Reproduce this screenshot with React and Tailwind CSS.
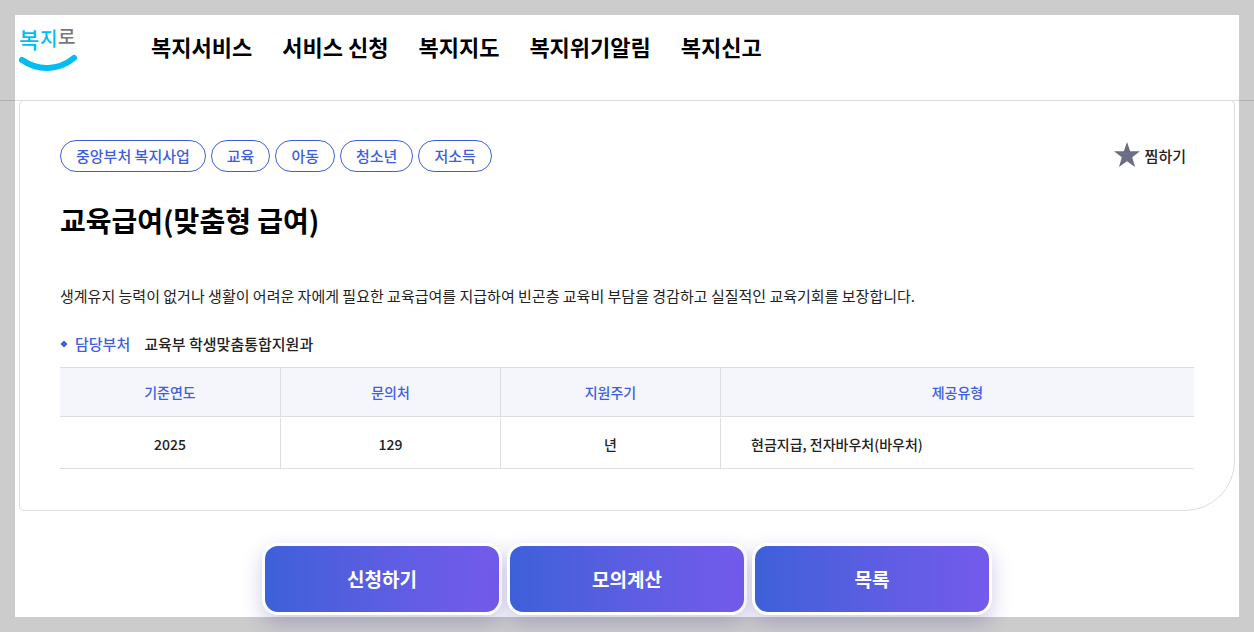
import React, { useState } from "react";

const MENU = ["복지서비스", "서비스 신청", "복지지도", "복지위기알림", "복지신고"];
const TAGS = ["중앙부처 복지사업", "교육", "아동", "청소년", "저소득"];
const ACTIONS = ["신청하기", "모의계산", "목록"];

const COLUMNS = [
  { label: "기준연도", value: "2025" },
  { label: "문의처", value: "129" },
  { label: "지원주기", value: "년" },
  { label: "제공유형", value: "현금지급, 전자바우처(바우처)" },
];

function Logo() {
  return (
    <svg viewBox="0 0 60 56" className="w-[60px] h-14" role="img" aria-label="복지로">
      <g fontFamily="'Noto Sans CJK KR', sans-serif" fontWeight="500">
        <text x="1" y="30" fontSize="22" fill="#00bdf2">복</text>
        <text x="22" y="28" fontSize="19" fill="#00bdf2">지</text>
        <text x="40" y="26" fontSize="19" fill="#77787b">로</text>
      </g>
      <path
        d="M4 42C20 53 40 53 56 40"
        fill="none"
        stroke="#00bdf2"
        strokeWidth="6"
        strokeLinecap="round"
      />
    </svg>
  );
}

function Header() {
  return (
    <header className="h-[101px] border-b border-[#dcdcdc] pl-[18px] flex items-start">
      <a href="#home" className="mt-[18px]">
        <Logo />
      </a>
      <nav className="ml-[73px] mt-[30px] flex gap-[30px]">
        {MENU.map((item) => (
          <a
            key={item}
            href="#menu"
            className="text-[22px] leading-8 font-bold text-black whitespace-nowrap"
          >
            {item}
          </a>
        ))}
      </nav>
    </header>
  );
}

function InfoTable() {
  return (
    <table className="mt-[11px] w-full table-fixed border-separate border-spacing-0 text-sm">
      <colgroup>
        <col className="w-[221px]" />
        <col className="w-[220px]" />
        <col className="w-[220px]" />
        <col />
      </colgroup>
      <thead>
        <tr>
          {COLUMNS.map((col) => (
            <th
              key={col.label}
              scope="col"
              className="h-[50px] border-y border-r last:border-r-0 border-[#dcdde0] bg-[#f5f6fb] font-medium text-[#3e5fdb]"
            >
              {col.label}
            </th>
          ))}
        </tr>
      </thead>
      <tbody>
        <tr>
          {COLUMNS.map((col) => (
            <td
              key={col.label}
              className="h-[52px] border-t-2 border-t-white border-b border-b-[#dcdde0] border-r border-r-[#dcdde0] last:border-r-0 text-center last:text-left last:pl-[30px] font-medium text-[#222]"
            >
              {col.value}
            </td>
          ))}
        </tr>
      </tbody>
    </table>
  );
}

export default function App() {
  const [liked, setLiked] = useState(false);

  return (
    <div className="relative min-h-screen overflow-hidden bg-white pb-[17px] font-['Noto_Sans_CJK_KR',sans-serif] text-[#222]">
      <Header />

      <main>
        <section className="mx-[19px] -mt-px border border-[#dcdcdc] rounded-[5px] rounded-br-[50px] px-10 pt-[39px] pb-[41px]">
          <div className="flex items-center justify-between">
            <ul className="flex gap-[5px]">
              {TAGS.map((tag) => (
                <li
                  key={tag}
                  className="h-8 px-[15px] flex items-center rounded-full border border-[#3e5fdb] text-[15px] font-medium text-[#3e5fdb]"
                >
                  {tag}
                </li>
              ))}
            </ul>
            <button
              type="button"
              aria-pressed={liked}
              onClick={() => setLiked(!liked)}
              className="mr-2 flex items-center gap-[5px] text-[15px] font-medium"
            >
              <svg viewBox="0 0 26 25" className="w-[26px] h-[25px] mb-1" aria-hidden="true">
                <path
                  d="M13 0L16.2 9.3H26L18.2 15.2L21 25L13 19.2L5 25L7.8 15.2L0 9.3H9.8Z"
                  fill={liked ? "#3e5fdb" : "#6b6d85"}
                />
              </svg>
              찜하기
            </button>
          </div>

          <h1 className="mt-7 text-[28px] leading-10 font-bold text-black">
            교육급여(맞춤형 급여)
          </h1>
          <p className="mt-11 text-[15px] leading-6">
            생계유지 능력이 없거나 생활이 어려운 자에게 필요한 교육급여를 지급하여 빈곤층 교육비 부담을 경감하고 실질적인 교육기회를 보장합니다.
          </p>

          <dl className="mt-6 flex items-center text-[15px] leading-6 font-medium">
            <dt className="flex items-center text-[#3e5fdb]">
              <svg viewBox="0 0 8 8" className="w-2 h-2 mr-[7px]" aria-hidden="true">
                <path d="M4 0.5L7.5 4L4 7.5L0.5 4Z" fill="#3e5fdb" />
              </svg>
              담당부처
            </dt>
            <dd className="ml-[14px]">교육부 학생맞춤통합지원과</dd>
          </dl>

          <InfoTable />
        </section>

        <div className="mt-8 flex justify-center gap-[5px]">
          {ACTIONS.map((label) => (
            <button
              key={label}
              type="button"
              className="w-60 h-[72px] rounded-2xl border-[3px] border-white bg-linear-to-r from-[#3d60d8] to-[#745aec] text-[19px] font-bold text-white shadow-[0_8px_20px_rgba(60,50,160,0.25)]"
            >
              {label}
            </button>
          ))}
        </div>
      </main>

      {/* dimmed edge around the page */}
      <div className="pointer-events-none absolute inset-0 border-[15px] border-black/20" />
    </div>
  );
}
